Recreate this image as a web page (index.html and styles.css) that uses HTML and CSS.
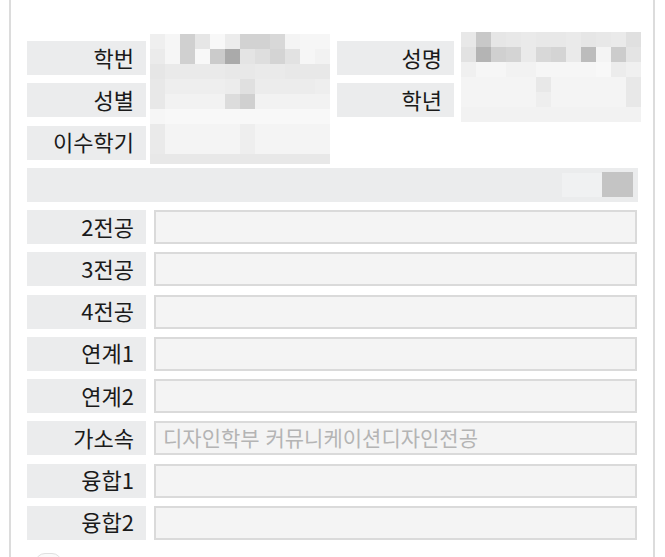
FILE: index.html
```html
<!DOCTYPE html>
<html lang="ko">
<head>
<meta charset="utf-8">
<title>학적 정보</title>
<link rel="stylesheet" href="styles.css">
</head>
<body>
<div class="panel">
  <div class="form">
    <div class="top">
      <div class="labels">
        <div class="label">학번</div>
        <div class="label">성별</div>
        <div class="label">이수학기</div>
      </div>
      <div class="mosaic mosaic-left">
        <div class="s-ef"></div><div class="s-f6"></div><div class="s-d0"></div><div class="s-e6"></div><div class="s-f8"></div><div class="s-ec"></div><div class="s-d2"></div><div class="s-d2"></div><div class="s-d8"></div><div class="s-f4"></div><div class="s-f6"></div><div class="s-f6"></div>
        <div class="s-eb"></div><div class="s-f6"></div><div class="s-d0"></div><div class="s-f8"></div><div class="s-cb"></div><div class="s-aa"></div><div class="s-e4"></div><div class="s-de"></div><div class="s-d4"></div><div class="s-e2"></div><div class="s-f6"></div><div class="s-f2"></div>
        <div class="s-e6"></div><div class="s-ea"></div><div class="s-ea"></div><div class="s-ea"></div><div class="s-ea"></div><div class="s-e8"></div><div class="s-e8"></div><div class="s-ea"></div><div class="s-ea"></div><div class="s-e8"></div><div class="s-e8"></div><div class="s-e8"></div>
        <div class="s-e8"></div><div class="s-ee"></div><div class="s-ee"></div><div class="s-ee"></div><div class="s-ee"></div><div class="s-ec"></div><div class="s-e0"></div><div class="s-ec"></div><div class="s-ec"></div><div class="s-ec"></div><div class="s-ec"></div><div class="s-ee"></div>
        <div class="s-e8"></div><div class="s-f2"></div><div class="s-f2"></div><div class="s-f2"></div><div class="s-f2"></div><div class="s-dc"></div><div class="s-d0"></div><div class="s-f2"></div><div class="s-f2"></div><div class="s-f2"></div><div class="s-f2"></div><div class="s-f2"></div>
        <div class="s-f6"></div><div class="s-f8"></div><div class="s-f8"></div><div class="s-f8"></div><div class="s-f8"></div><div class="s-f8"></div><div class="s-f8"></div><div class="s-f8"></div><div class="s-f8"></div><div class="s-f8"></div><div class="s-f8"></div><div class="s-f8"></div>
        <div class="s-ea"></div><div class="s-f4"></div><div class="s-f4"></div><div class="s-f4"></div><div class="s-f4"></div><div class="s-f4"></div><div class="s-ee"></div><div class="s-f4"></div><div class="s-f4"></div><div class="s-f4"></div><div class="s-f4"></div><div class="s-f4"></div>
        <div class="s-ea"></div><div class="s-f4"></div><div class="s-f4"></div><div class="s-f4"></div><div class="s-f4"></div><div class="s-f4"></div><div class="s-ee"></div><div class="s-f4"></div><div class="s-f4"></div><div class="s-f4"></div><div class="s-f4"></div><div class="s-f4"></div>
        <div class="s-e8"></div><div class="s-e8"></div><div class="s-e8"></div><div class="s-e8"></div><div class="s-e8"></div><div class="s-e8"></div><div class="s-e8"></div><div class="s-e8"></div><div class="s-e8"></div><div class="s-e8"></div><div class="s-e8"></div><div class="s-e8"></div>
      </div>
      <div class="labels labels-right">
        <div class="label">성명</div>
        <div class="label">학년</div>
      </div>
      <div class="mosaic mosaic-right">
        <div class="s-e8"></div><div class="s-c8"></div><div class="s-e6"></div><div class="s-e8"></div><div class="s-ea"></div><div class="s-e8"></div><div class="s-e8"></div><div class="s-ea"></div><div class="s-e6"></div><div class="s-e8"></div><div class="s-ea"></div><div class="s-e0"></div>
        <div class="s-e2"></div><div class="s-b4"></div><div class="s-d0"></div><div class="s-d4"></div><div class="s-ea"></div><div class="s-d8"></div><div class="s-d4"></div><div class="s-ea"></div><div class="s-bc"></div><div class="s-f4"></div><div class="s-cc"></div><div class="s-e4"></div>
        <div class="s-f0"></div><div class="s-f6"></div><div class="s-f6"></div><div class="s-f2"></div><div class="s-f2"></div><div class="s-f6"></div><div class="s-f6"></div><div class="s-f6"></div><div class="s-f6"></div><div class="s-f8"></div><div class="s-ec"></div><div class="s-f0"></div>
        <div class="s-f4"></div><div class="s-f4"></div><div class="s-f4"></div><div class="s-f4"></div><div class="s-f4"></div><div class="s-e8"></div><div class="s-f4"></div><div class="s-f4"></div><div class="s-f4"></div><div class="s-f4"></div><div class="s-f4"></div><div class="s-e8"></div>
        <div class="s-f4"></div><div class="s-f4"></div><div class="s-f4"></div><div class="s-f4"></div><div class="s-f4"></div><div class="s-ee"></div><div class="s-f4"></div><div class="s-f4"></div><div class="s-f4"></div><div class="s-f4"></div><div class="s-f4"></div><div class="s-e8"></div>
        <div class="s-f2"></div><div class="s-f2"></div><div class="s-f2"></div><div class="s-f2"></div><div class="s-f2"></div><div class="s-f2"></div><div class="s-f2"></div><div class="s-f2"></div><div class="s-f2"></div><div class="s-f2"></div><div class="s-f2"></div><div class="s-f2"></div>
      </div>
    </div>

    <div class="bar">
      <div class="bar-light"></div>
      <div class="bar-dark"></div>
    </div>

    <div class="row"><div class="label">2전공</div><div class="field"></div></div>
    <div class="row"><div class="label">3전공</div><div class="field"></div></div>
    <div class="row"><div class="label">4전공</div><div class="field"></div></div>
    <div class="row"><div class="label">연계1</div><div class="field"></div></div>
    <div class="row"><div class="label">연계2</div><div class="field"></div></div>
    <div class="row"><div class="label">가소속</div><div class="field">디자인학부 커뮤니케이션디자인전공</div></div>
    <div class="row"><div class="label">융합1</div><div class="field"></div></div>
    <div class="row"><div class="label">융합2</div><div class="field"></div></div>

    <div class="footer"><div class="pill"></div></div>
  </div>
</div>
</body>
</html>
```
FILE: styles.css
```css
html, body {
  margin: 0;
  padding: 0;
  background: #ffffff;
  overflow: hidden;
}

body {
  font-family: "Noto Sans CJK KR", "Noto Sans", sans-serif;
  color: #1a1a1a;
}

.panel {
  margin-left: 9px;
  width: 642px;
  height: 600px;
  border-left: 2px solid #dcdcdc;
  border-right: 2px solid #dcdcdc;
}

.form {
  padding: 41px 0 0 16px;
  display: flex;
  flex-direction: column;
  gap: 8.27px;
}

.top {
  display: flex;
  align-items: flex-start;
  height: 118.54px;
}

.labels {
  display: flex;
  flex-direction: column;
  gap: 8.27px;
  width: 119px;
  flex: none;
}

.labels-right {
  width: 117px;
  margin-left: 7px;
}

.label {
  height: 34px;
  background: #ebeced;
  display: flex;
  align-items: center;
  justify-content: flex-end;
  padding: 0 12px 3px 0;
  font-size: 22px;
  line-height: 1;
  color: #1a1a1a;
  box-sizing: border-box;
}

.mosaic {
  display: grid;
  grid-template-columns: repeat(12, 15px);
  flex: none;
}

.mosaic-left {
  grid-template-rows: repeat(8, 15px) 10px;
  margin-top: -7px;
  margin-left: 4px;
}

.mosaic-right {
  grid-template-rows: repeat(6, 15px);
  margin-top: -9px;
  margin-left: 7px;
}

.bar {
  width: 611px;
  height: 34px;
  background: #ebeced;
  display: flex;
  justify-content: flex-end;
  align-items: center;
  padding-right: 5px;
  box-sizing: border-box;
}

.bar-light {
  width: 40px;
  height: 24px;
  background: #f0f1f2;
}

.bar-dark {
  width: 31px;
  height: 25px;
  background: #c4c4c4;
}

.row {
  display: flex;
  gap: 8px;
  height: 34px;
}

.row .label {
  width: 119px;
  flex: none;
}

.field {
  width: 483px;
  height: 34px;
  box-sizing: border-box;
  border: 2px solid #dadada;
  background: #f4f4f4;
  color: #b4b4b4;
  font-size: 21px;
  line-height: 28px;
  padding-left: 7px;
  white-space: nowrap;
}

.footer {
  margin-top: 4.7px;
  padding-left: 8px;
}

.pill {
  width: 25px;
  height: 20px;
  border: 1px solid #e0e0e0;
  border-radius: 10px;
  background: #fafafa;
}

.s-aa { background: #aaaaaa; }
.s-b4 { background: #b4b4b4; }
.s-bc { background: #bcbcbc; }
.s-c8 { background: #c8c8c8; }
.s-cb { background: #cbcbcb; }
.s-cc { background: #cccccc; }
.s-d0 { background: #d0d0d0; }
.s-d2 { background: #d2d2d2; }
.s-d4 { background: #d4d4d4; }
.s-d8 { background: #d8d8d8; }
.s-dc { background: #dcdcdc; }
.s-de { background: #dedede; }
.s-e0 { background: #e0e0e0; }
.s-e2 { background: #e2e2e2; }
.s-e4 { background: #e4e4e4; }
.s-e6 { background: #e6e6e6; }
.s-e8 { background: #e8e8e8; }
.s-ea { background: #eaeaea; }
.s-eb { background: #ebebeb; }
.s-ec { background: #ececec; }
.s-ee { background: #eeeeee; }
.s-ef { background: #efefef; }
.s-f0 { background: #f0f0f0; }
.s-f2 { background: #f2f2f2; }
.s-f4 { background: #f4f4f4; }
.s-f6 { background: #f6f6f6; }
.s-f8 { background: #f8f8f8; }
```
